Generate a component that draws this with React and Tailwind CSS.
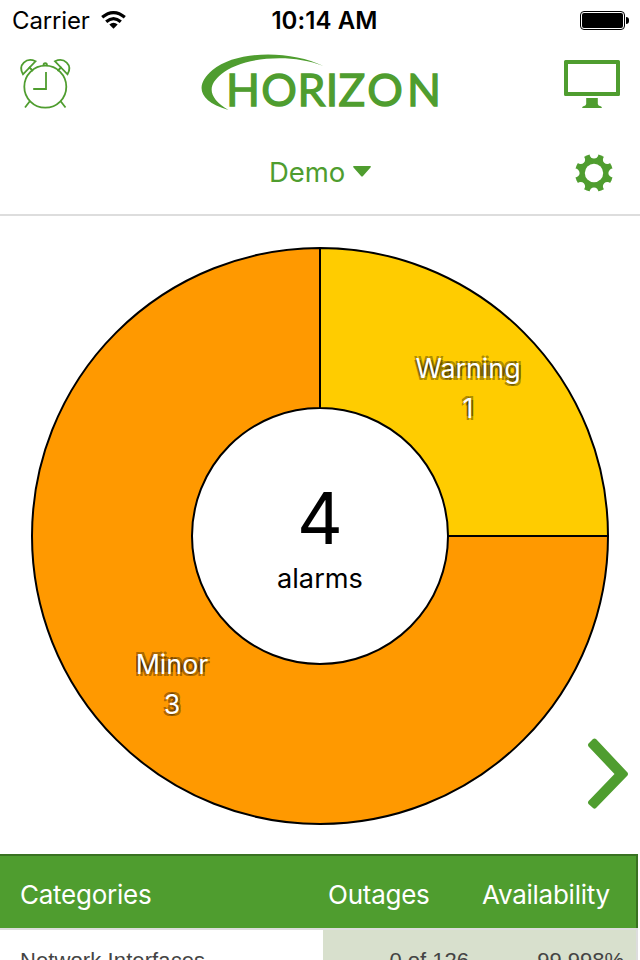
const G = "#4f9d2f";

function Alarm() {
  return (
    <svg className="h-[60px] w-[60px]" viewBox="0 0 60 60" fill="none" stroke={G} strokeWidth="1.800">
      <circle cx="30.300" cy="36.700" r="21" />
      <path d="M28.500 15.500c0-3 3.500-3 3.500 0" />
      <path d="M8 24.300C2.500 15 11.500 7 20.500 11.300Z M52.500 24.300C58 15 49 7 40 11.300Z" />
      <path d="M14 17l4 4M46.500 17l-4 4M15 51l-5 6.500M45.500 51l5 6.500" />
      <path d="M31 22v17H18.200" />
    </svg>
  );
}

function Logo() {
  return (
    <svg className="h-[74px] w-[250px]" viewBox="194.500 50 250 74">
      <path d="M323 66C290 50 236 50 212 70C195 84 196 101 228 110C208 98 206 86 221 74C240 58 288 52 323 66Z" fill={G} />
      <text x="242.500 278.500 311 331.500 351.500 384.500 423.500" y="105.500" textAnchor="middle" fill={G} stroke={G} strokeWidth="1.300" fontFamily="Lato" fontSize="44.500">HORIZON</text>
    </svg>
  );
}

function Gear() {
  const notches = [0, 45, 90, 135, 180, 225, 270, 315];
  return (
    <svg className="h-[40px] w-[40px]" viewBox="-20 -20 40 40">
      <circle r="19" fill={G} />
      {notches.map((a) => (
        <circle key={a} transform={`rotate(${a})`} cy="-18.800" r="4.400" fill="#fff" />
      ))}
      <circle r="9.200" fill="#fff" />
    </svg>
  );
}

function Donut() {
  return (
    <svg className="h-[580px] w-[580px]" viewBox="30 246 580 580">
      <g stroke="#000" strokeWidth="2">
        <path d="M320 248A288 288 0 0 1 608 536H448A128 128 0 0 0 320 408Z" fill="#ffcc00" />
        <path d="M608 536A288 288 0 1 1 320 248V408A128 128 0 1 0 448 536Z" fill="#ff9900" />
      </g>
    </svg>
  );
}

const shadow = "[text-shadow:-2px_-2px_0_#0005,2px_-2px_0_#0005,-2px_2px_0_#0005,2px_2px_0_#0005]";

function SliceLabel({ className, name, count }) {
  return (
    <div className={`absolute -translate-x-1/2 text-center text-[26.8px] leading-[40px] text-white ${shadow} ${className}`}>
      <div>{name}</div>
      <div>{count}</div>
    </div>
  );
}

export default function App() {
  return (
    <div className="flex h-[960px] w-[640px] flex-col overflow-hidden bg-white font-['Inter','Liberation_Sans',sans-serif] text-black">
      <div className="grid h-10 shrink-0 grid-cols-3 items-center pl-3 pr-[11px] pt-px text-[24px] leading-10">
        <div className="flex items-center gap-[11px]">
          <span className="tracking-[-0.15px]">Carrier</span>
          <svg className="mb-[2px] h-[18px] w-[25px]" viewBox="0 0 25 18" fill="none" stroke="#000" strokeWidth="3.200">
            <path d="M1.200 6.300Q12.500 -3 23.800 6.300" />
            <path d="M5.200 10.800Q12.500 4.500 19.800 10.800" />
            <path d="M8.300 13.500Q12.500 10 16.700 13.500L12.500 17.800Z" fill="#000" stroke="none" />
          </svg>
        </div>
        <div className="whitespace-nowrap pl-[8px] text-center font-semibold tracking-[0.1px]">10:14 AM</div>
        <div className="flex items-center justify-end gap-px pb-[2px]">
          <div className="h-[19px] w-[45px] rounded-[4px] border border-black p-px">
            <div className="h-full rounded-[2px] bg-black" />
          </div>
          <div className="h-[7px] w-[3px] rounded-r-full bg-black" />
        </div>
      </div>

      <div className="flex h-[88px] shrink-0 items-start justify-between pl-[15px] pr-5 pt-[10px]">
        <Alarm />
        <Logo />
        <svg className="mt-[10px] h-[48px] w-[56px]" viewBox="0 0 56 48">
          <path fillRule="evenodd" d="M1.500 0h53q1.500 0 1.500 1.500v33q0 1.500-1.500 1.500h-53Q0 36 0 34.500v-33Q0 0 1.500 0ZM4 4v28h48V4Z" fill={G} />
          <path d="M22.200 38h11.600v6q0 1.500 3.400 2.500l.8 1.500H18l.8-1.500q3.400-1 3.400-2.500Z" fill={G} />
        </svg>
      </div>

      <div className="grid h-[88px] shrink-0 grid-cols-[1fr_auto_1fr] items-center border-b-2 border-[#dddddd] pr-[26px] pt-[3px]">
        <div />
        <div className="flex items-center gap-2 pl-[26px] text-[27.5px] text-[#4f9d2f]">
          <span className="tracking-[-0.1px]">Demo</span>
          <svg className="mt-[-2px] h-[11px] w-[18px]" viewBox="0 0 18 11"><path d="M1 0h16q1.500 0 .5 1.500L10 10q-1 1.200-2 0L.5 1.500Q-.5 0 1 0Z" fill={G} /></svg>
        </div>
        <div className="flex justify-end"><Gear /></div>
      </div>

      <div className="relative flex h-[638px] shrink-0 justify-center pt-[30px]">
        <Donut />
        <div className="absolute left-0 top-[260px] w-full text-center">
          <div className="text-[71px] leading-[85px]">4</div>
          <div className="text-[27.2px] leading-[36px]">alarms</div>
        </div>
        <SliceLabel className="left-[468px] top-[132px]" name="Warning" count="1" />
        <SliceLabel className="left-[172px] top-[428px]" name="Minor" count="3" />
        <svg className="absolute left-[587px] top-[522px] h-[72px] w-[42px]" viewBox="0 0 42 72">
          <path d="M1.500 5.500L6 1Q7.500 0 9 1L40.500 34.500Q41.500 36 40.500 37.500L9 70Q7.500 71.500 6 70L1.500 66Q.5 64.500 1.500 63L27.500 36L1.500 8.500Q.5 7 1.500 5.500Z" fill={G} />
        </svg>
      </div>

      <div className="mr-[2px] flex h-[74px] shrink-0 items-center border-r-2 border-t-2 border-[#397222] bg-[#4f9d2f] pl-5 pt-[5px] text-[26px] tracking-[-0.25px] text-white">
        <div className="w-[308px]">Categories</div>
        <div className="w-[154px]">Outages</div>
        <div>Availability</div>
      </div>
      <div className="mr-[2px] flex h-[60px] shrink-0 border-r-2 border-t-2 border-[#dddddd] font-['Liberation_Sans',sans-serif] text-[22px] leading-[25px] text-[#444444]">
        <div className="w-[323px] pl-5 pt-[18px] tracking-[0.1px]">Network Interfaces</div>
        <div className="flex flex-1 bg-[#d8e0cd] pt-[18px]">
          <div className="w-[146px] text-right">0 of 126</div>
          <div className="w-[155px] text-right">99.998%</div>
        </div>
      </div>
    </div>
  );
}
